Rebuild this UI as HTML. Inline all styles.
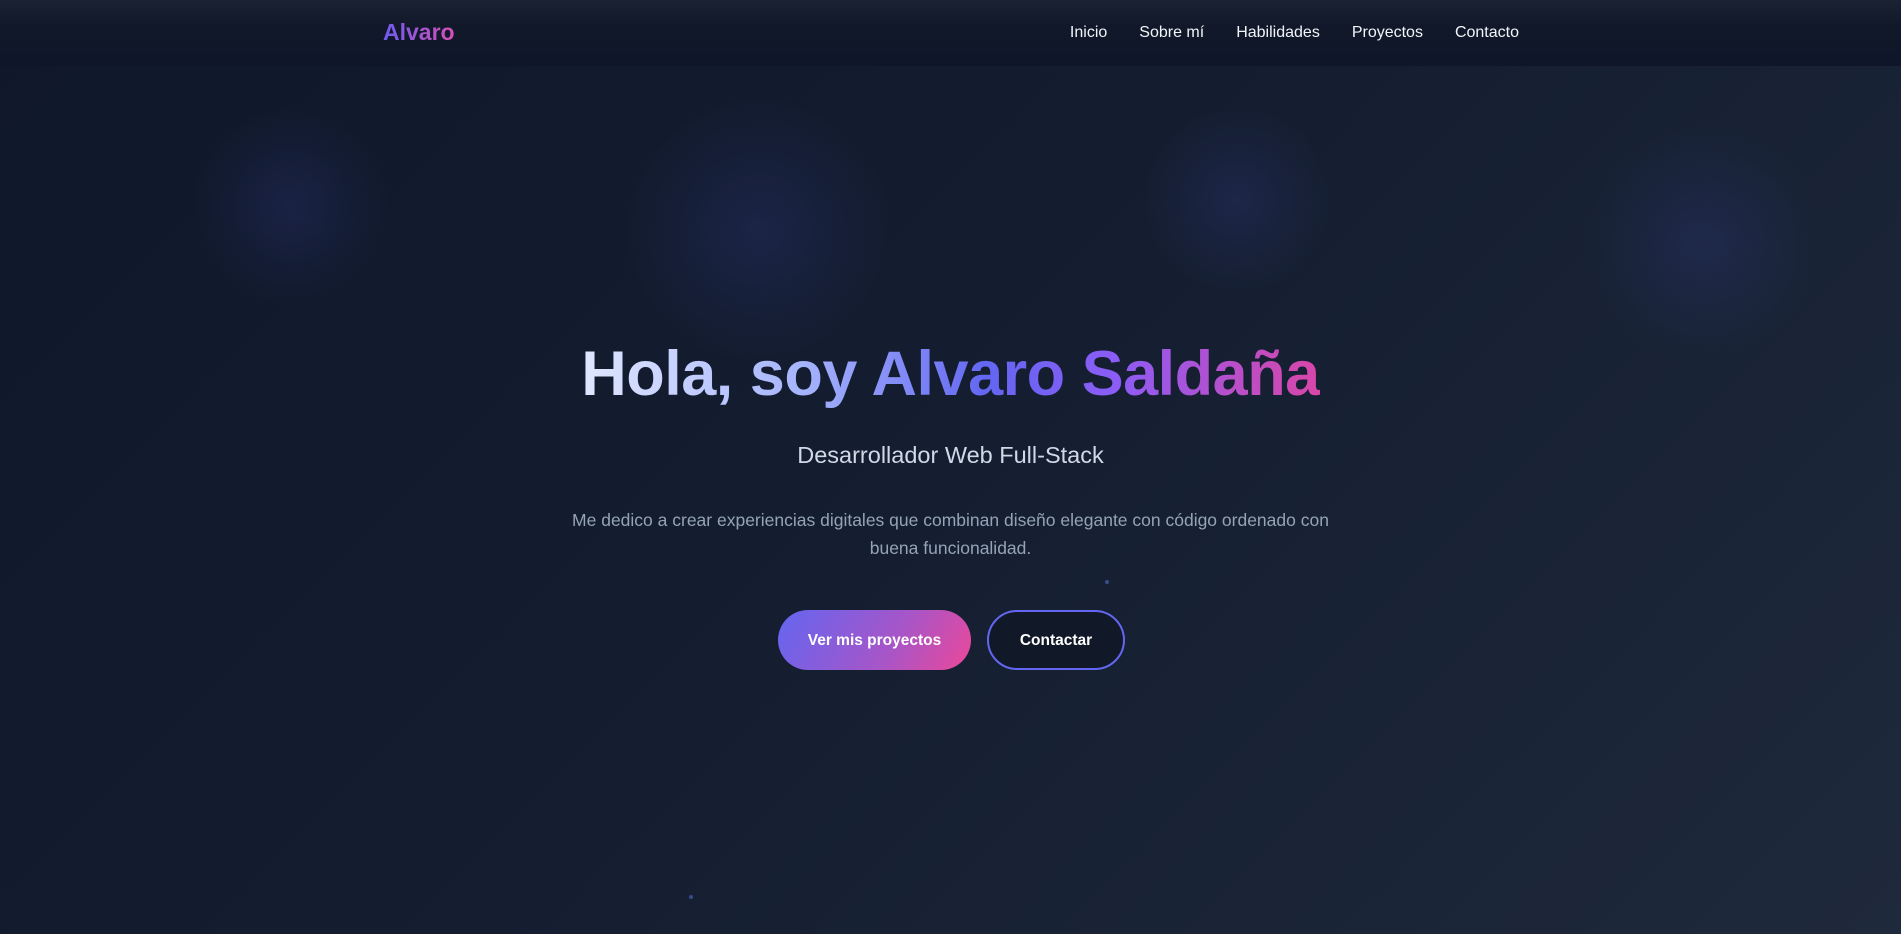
<!DOCTYPE html>
<html><head><meta charset="utf-8"><style>
*{margin:0;padding:0;box-sizing:border-box}
html,body{width:1901px;height:934px;overflow:hidden}
body{font-family:"Liberation Sans",sans-serif;background:linear-gradient(135deg,#0f172a 0%,#141d30 45%,#1e293b 100%);position:relative;color:#fff}
.glow{position:absolute;border-radius:50%;background:radial-gradient(circle,rgba(49,58,130,.28) 0%,rgba(40,50,110,.12) 45%,rgba(30,40,90,0) 70%)}
nav{position:absolute;top:0;left:0;width:1901px;height:66px;background:linear-gradient(180deg,#1b2233 0%,#111829 40%,#0f1629 100%)}
.logo{position:absolute;left:383px;top:19px;font-size:23px;font-weight:bold;background:linear-gradient(90deg,#6d5cf0,#d64fb5);-webkit-background-clip:text;background-clip:text;color:transparent}
.links{position:absolute;right:382px;top:24px;display:flex;gap:32px;font-size:16px;color:#f1f5f9}
h1{position:absolute;top:338px;left:0;width:1901px;text-align:center;font-size:63px;font-weight:bold;letter-spacing:-.5px}
h1 span{background:linear-gradient(90deg,#e0e7ff 0%,#a5b4fc 30%,#6366f1 55%,#8b5cf6 72%,#d946a8 100%);-webkit-background-clip:text;background-clip:text;color:transparent}
.sub{position:absolute;top:442px;width:1901px;text-align:center;font-size:23.5px;color:#d1d9e6}
.p{position:absolute;top:506px;left:560px;width:781px;text-align:center;font-size:17.5px;line-height:28px;color:#94a3b8}
.btn{position:absolute;top:610px;height:60px;border-radius:30px;display:flex;align-items:center;justify-content:center;font-size:15.5px;font-weight:bold;color:#fff;padding-top:2px}
.b1{left:778px;width:193px;background:linear-gradient(120deg,#6366f1,#a855c7 60%,#ec4899)}
.b2{left:987px;width:138px;border:2px solid #6366f1;background:#111827}
.dot{position:absolute;width:4px;height:4px;border-radius:50%;background:#3b4a8a}
</style></head><body>
<div class="glow" style="left:191px;top:106px;width:200px;height:200px"></div>
<div class="glow" style="left:618px;top:100px;width:280px;height:260px"></div>
<div class="glow" style="left:1137px;top:110px;width:200px;height:180px"></div>
<div class="glow" style="left:1583px;top:122px;width:240px;height:240px"></div>
<nav><div class="logo">Alvaro</div>
<div class="links"><span>Inicio</span><span>Sobre mí</span><span>Habilidades</span><span>Proyectos</span><span>Contacto</span></div></nav>
<h1><span>Hola, soy Alvaro Saldaña</span></h1>
<div class="sub">Desarrollador Web Full-Stack</div>
<div class="p">Me dedico a crear experiencias digitales que combinan diseño elegante con código ordenado con buena funcionalidad.</div>
<div class="btn b1">Ver mis proyectos</div>
<div class="btn b2">Contactar</div>
<div class="dot" style="left:1105px;top:580px"></div>
<div class="dot" style="left:689px;top:895px"></div>
</body></html>
